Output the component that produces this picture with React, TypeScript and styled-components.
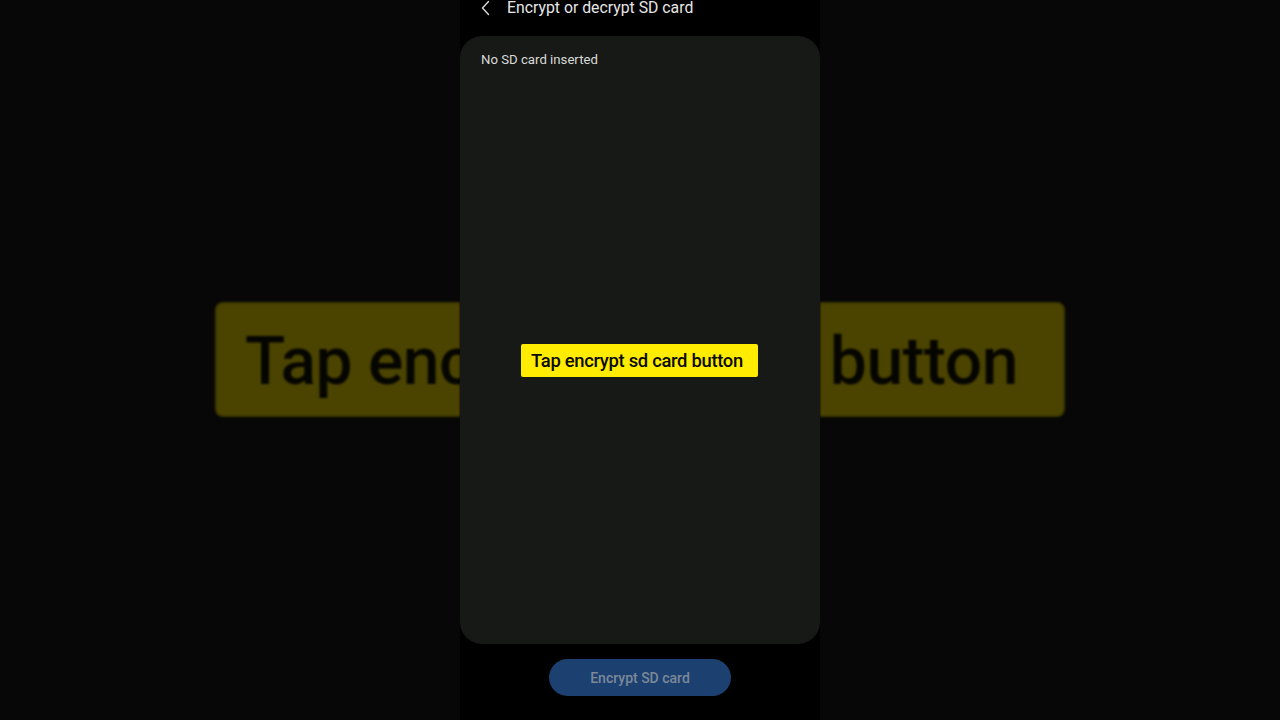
import React, { FC } from "react";
import styled, { createGlobalStyle, css } from "styled-components";

const GlobalStyle = createGlobalStyle`
    html, body, #root {
        margin: 0;
        padding: 0;
        height: 100%;
    }

    body {
        background: #060706;
        font-family: Roboto, "Noto Sans", sans-serif;
        overflow: hidden;
    }
`;

const CAPTION = "Tap encrypt sd card button";

const App: FC = () => {
    return (
        <>
            <GlobalStyle />
            <Stage>
                {/* blurred, zoomed copy of the caption peeking out on both sides */}
                <Backdrop aria-hidden>
                    <BannerPiece side="left">
                        <BannerText>Tap enc</BannerText>
                    </BannerPiece>
                    <BannerGap />
                    <BannerPiece side="right">
                        <BannerText>button</BannerText>
                    </BannerPiece>
                </Backdrop>
                <Phone>
                    <Header>
                        <BackButton aria-label="Back">
                            <svg width="12" height="16" viewBox="0 0 12 16" fill="none">
                                <path d="M8.5 1.5 L2.5 8 L8.5 14.5" stroke="#d8d8d8" strokeWidth="1.4" strokeLinecap="round" strokeLinejoin="round" />
                            </svg>
                        </BackButton>
                        <Title>Encrypt or decrypt SD card</Title>
                    </Header>
                    <Card>
                        <StatusText>No SD card inserted</StatusText>
                        <CaptionArea>
                            <Caption>{CAPTION}</Caption>
                        </CaptionArea>
                    </Card>
                    <Footer>
                        <EncryptButton disabled>Encrypt SD card</EncryptButton>
                    </Footer>
                </Phone>
            </Stage>
        </>
    );
};

export default App;

const Stage = styled.div`
    position: relative;
    width: 100%;
    height: 100%;
    display: flex;
    justify-content: center;
    background: #060706;
`;

const Backdrop = styled.div`
    position: absolute;
    inset: 0;
    display: flex;
    align-items: center;
    justify-content: center;
    padding-bottom: 2px;
    filter: blur(1.2px);
`;

const BannerGap = styled.div`
    width: 360px;
    flex-shrink: 0;
`;

interface BannerPieceProps {
    side: "left" | "right";
}

const BannerPiece = styled.div<BannerPieceProps>`
    width: 245px;
    height: 115px;
    box-sizing: border-box;
    flex-shrink: 0;
    background: #4b4400;
    border: 2px solid #3d3800;
    overflow: hidden;
    display: flex;
    align-items: center;
    ${p => p.side === "left" ? css`
        border-right: none;
        border-radius: 8px 0 0 8px;
        padding-left: 28px;
    ` : css`
        border-left: none;
        border-radius: 0 8px 8px 0;
        justify-content: flex-end;
        padding-right: 45px;
    `}
`;

const BannerText = styled.span`
    font-family: Roboto, sans-serif;
    font-weight: 500;
    font-size: 66px;
    color: #060600;
    letter-spacing: -0.5px;
    white-space: nowrap;
    margin-top: 4px;
`;

const Phone = styled.div`
    position: relative;
    z-index: 1;
    width: 360px;
    height: 100%;
    background: #000;
    display: flex;
    flex-direction: column;
`;

const Header = styled.div`
    height: 36px;
    display: flex;
    align-items: flex-start;
    padding-left: 20px;
    gap: 15px;
`;

const BackButton = styled.div`
    display: flex;
    height: 16px;
    align-items: center;
`;

const Title = styled.span`
    color: #e6e6e6;
    font-size: 15.8px;
    line-height: 15px;
`;

const Card = styled.div`
    height: 608px;
    background: #161915;
    border-radius: 22px;
    display: flex;
    flex-direction: column;
    padding: 16px 21px 0;
    box-sizing: border-box;
`;

const StatusText = styled.span`
    color: #d9d9d9;
    font-size: 13.2px;
    line-height: 16px;
`;

const CaptionArea = styled.div`
    flex: 1;
    display: flex;
    justify-content: center;
    padding-top: 276px;
`;

const Caption = styled.div`
    align-self: flex-start;
    background: #ffec00;
    color: #0a0a00;
    font-weight: 500;
    font-size: 18.4px;
    line-height: 33px;
    padding: 0 15px 0 10px;
    margin-left: -1px;
    border-radius: 2px;
    letter-spacing: -0.3px;
    white-space: nowrap;
`;

const Footer = styled.div`
    display: flex;
    justify-content: center;
    padding-top: 15px;
`;

const EncryptButton = styled.button`
    width: 182px;
    height: 37px;
    border: none;
    border-radius: 19px;
    background: #1c4171;
    color: #7c8898;
    font-family: Roboto, "Noto Sans", sans-serif;
    font-weight: 500;
    font-size: 14px;
    padding: 0;
`;
